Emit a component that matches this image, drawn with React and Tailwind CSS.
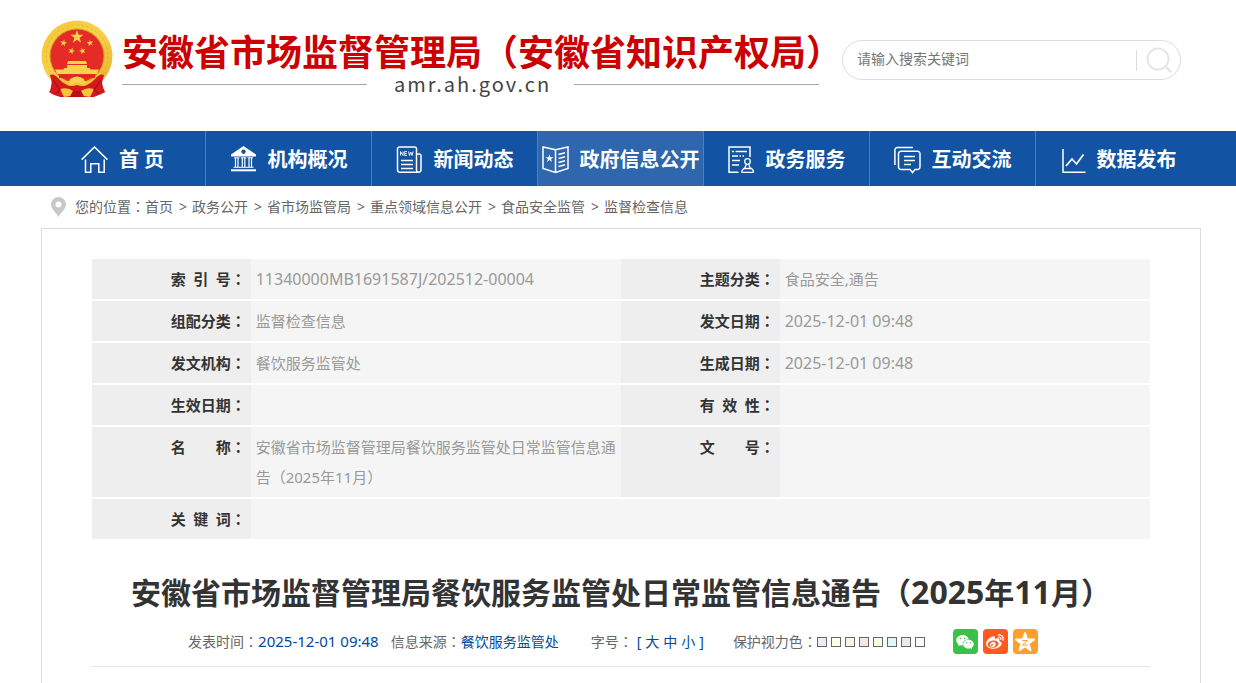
import { FaWeibo } from 'react-icons/fa'
import { AiFillWechat } from 'react-icons/ai'

const STAR = 'M0 -10 L2.3 -3.1 L9.5 -3.1 L3.7 1.2 L5.9 8.1 L0 3.8 L-5.9 8.1 L-3.7 1.2 L-9.5 -3.1 L-2.3 -3.1 Z'

const Emblem = () => (
  <svg className="h-[78px] w-[72px] shrink-0" viewBox="0 0 72 78">
    <defs>
      <linearGradient id="gold" x1="0" y1="0" x2="1" y2="1">
        <stop offset="0" stopColor="#f5c63a" />
        <stop offset="0.5" stopColor="#f8d24c" />
        <stop offset="1" stopColor="#e9ae2a" />
      </linearGradient>
    </defs>
    <path d="M11 54 Q14 64 26 64 L46 64 Q58 64 61 54 Q60 65 64 72 L57 75 L53 77 L19 77 L15 75 L9 72 Q11 64 11 54Z" fill="#c9151b" />
    <circle cx="36" cy="36" r="35.5" fill="url(#gold)" />
    <circle cx="36" cy="36" r="31" fill="none" stroke="#dfa026" strokeWidth="1.5" strokeDasharray="3 2" opacity="0.35" />
    <circle cx="36" cy="36" r="27.5" fill="#d9a022" />
    <circle cx="36" cy="36" r="26.5" fill="#e52b25" />
    <g fill="#f8d24c">
      <path d={STAR} transform="translate(36 17) scale(.7)" />
      <path d={STAR} transform="translate(22.5 23) scale(.36) rotate(12)" />
      <path d={STAR} transform="translate(49 23) scale(.36) rotate(-12)" />
      <path d={STAR} transform="translate(30.5 31) scale(.36) rotate(20)" />
      <path d={STAR} transform="translate(41.5 31) scale(.36) rotate(-20)" />
      <path d="M27 41h18l1 3h-20zM26 45h20v3H26zM23 48h26l1 4H22zM14 49.500h44l-2 4.500H16z" />
    </g>
    <path d="M18 55h36v3H18z" fill="#d92a22" />
    <path d="M9 55 Q13 53 18 59 Q24 66 32 65 L40 65 Q48 66 54 59 Q59 53 63 55 L60 66 L64 72 Q56 77 50 76 L22 76 Q14 77 8 72 L12 66Z" fill="#d7191d" />
    <path d="M20 59 Q28 64 36 57 Q44 64 52 59 Q47 67 40 66 L36 65 L32 66 Q25 67 20 59Z" fill="#f3c13b" />
    <path d="M29 59 Q36 54 43 59 L44 65 L36 62 L28 65Z" fill="#f8d24c" />
    <path d="M19 69 Q27 67 32 71 L29 76 L23 77Z M53 69 Q45 67 40 71 L43 76 L49 77Z" fill="#f5c63a" />
    <path d="M32 71h8l2 6H30z" fill="#b81117" />
    <path d="M12 60 L19 70 L14 74 M60 60 L53 70 L58 74" fill="none" stroke="#a90f15" strokeWidth="1.200" />
  </svg>
)

const iconProps = {
  className: 'h-7 w-[27px] shrink-0',
  viewBox: '0 0 27 28',
  fill: 'none',
  stroke: 'currentColor',
  strokeWidth: 1.5,
  'aria-hidden': true,
}

const HomeIcon = () => (
  <svg {...iconProps}>
    <path d="M.6 13.600 13.500 1 26.400 13.600M4.500 13.500V26.300H9.800V17.800H17.800V26.300H23.200V13.500" />
  </svg>
)

const BankIcon = () => (
  <svg {...iconProps}>
    <path d="M13.500 0 26 8.500V10.500H1V8.500Z M13.500 3.500a2.200 2.200 0 1 0 .01 0Z" fill="currentColor" fillRule="evenodd" stroke="none" />
    <path d="M5.500 12V21M8 12V21M12.300 12V21M14.800 12V21M19 12V21M21.500 12V21" strokeWidth="1.200" />
    <path d="M4 11.800H9.500M10.800 11.800H16.300M17.500 11.800H23M3.500 21.300H23.500" strokeWidth="1" />
    <path d="M1 24.300H26" strokeWidth="2" />
  </svg>
)

const NewsIcon = () => (
  <svg {...iconProps}>
    <path d="M20.500 26.300H4A2.500 2.500 0 0 1 1.500 24V3A2 2 0 0 1 3.500 1H18.500A2 2 0 0 1 20.500 3V24A2.200 2.200 0 0 0 25 24V9.500A1.500 1.500 0 0 0 23.500 8H20.500M20.500 26.300H23" />
    <path d="M5 14.500H17M5 18.500H17M5 22.500H17" />
    <path d="M4.500 9.500V5.500L7 9.500V5.500M11 5.500H8.700V9.500H11M8.700 7.500H10.700M12.500 5.500 13.500 9.500 14.800 6 16 9.500 17.200 5.500" strokeWidth=".9" />
  </svg>
)

const BookIcon = () => (
  <svg {...iconProps}>
    <path d="M13.500 3.800 1 1V22.500L13.500 26.500 26 22.500V1Z M13.500 3.800V26.500" />
    <path d={STAR} transform="translate(7.500 12.500) scale(.42)" fill="currentColor" stroke="none" />
    <path d="M16.500 8.500 23 6.800M16.500 12.500 23 10.800M16.500 16.500 23 14.800M16.500 20.500 23 18.800" />
  </svg>
)

const StampIcon = () => (
  <svg {...iconProps}>
    <path d="M10.500 26.300H1V1H22V11" />
    <path d="M4 5.500H6M7.500 5.500H19M4 10H10M11.500 10H13M14.500 10H16M4 14.500H12M4 19H11" strokeWidth="1.300" />
    <circle cx="19.500" cy="15.500" r="2.800" strokeWidth="1.300" />
    <path d="M18.500 18 16.500 22.500H22.500L20.500 18M14 26.300V24.500L16 22.500H23.500L25.300 24.500V26.300Z" strokeWidth="1.300" />
  </svg>
)

const ChatIcon = () => (
  <svg {...iconProps}>
    <path d="M.9 19V4A2.500 2.500 0 0 1 3.400 1.500H19" />
    <path d="M7 5.300H23.500A2.500 2.500 0 0 1 26 7.800V21A2.500 2.500 0 0 1 23.500 23.500H21L18.500 26.500 16 23.500H7A2.500 2.500 0 0 1 4.500 21V7.800A2.500 2.500 0 0 1 7 5.300Z" />
    <path d="M10 10.500H21M10 14.500H21M10 18.500H17" />
  </svg>
)

const ChartIcon = () => (
  <svg {...iconProps} className="h-7 w-6 shrink-0" viewBox="0 0 24 28">
    <path d="M1 3V26.300H23.500" />
    <path d="M4 20 10 13 14.500 18 21.500 8.500" strokeWidth="1.700" />
  </svg>
)

// the full-width colon sits in the middle of its box in this face
const Colon = () => <span className="leading-none font-['Noto_Sans_CJK_TC',sans-serif]">：</span>

const navItems = [
  { label: '首 页', icon: HomeIcon },
  { label: '机构概况', icon: BankIcon },
  { label: '新闻动态', icon: NewsIcon },
  { label: '政府信息公开', icon: BookIcon, active: true },
  { label: '政务服务', icon: StampIcon },
  { label: '互动交流', icon: ChatIcon },
  { label: '数据发布', icon: ChartIcon },
]

const crumbs = ['首页', '政务公开', '省市场监管局', '重点领域信息公开', '食品安全监管', '监督检查信息']

const rows = [
  ['索 引 号', '11340000MB1691587J/202512-00004', '主题分类', '食品安全,通告'],
  ['组配分类', '监督检查信息', '发文日期', <span className="text-base">2025-12-01 09:48</span>],
  ['发文机构', '餐饮服务监管处', '生成日期', <span className="text-base">2025-12-01 09:48</span>],
  ['生效日期', '', '有 效 性', ''],
  ['名 称', '安徽省市场监督管理局餐饮服务监管处日常监管信息通告（2025年11月）', '文 号', ''],
]
rows[0][1] = <span className="text-base">{rows[0][1]}</span>

const swatches = [
  { name: '浅蓝', color: 'bg-[#e9eef6]' },
  { name: '浅黄', color: 'bg-[#faffe6]' },
  { name: '杏色', color: 'bg-[#fff2e2]' },
  { name: '粉色', color: 'bg-[#fde6e0]' },
  { name: '浅绿', color: 'bg-[#f3ffe1]' },
  { name: '青色', color: 'bg-[#dafaf3]' },
  { name: '灰色', color: 'bg-[#eaeaef]' },
  { name: '白色', color: 'bg-white' },
]

const Label = ({ children }) => (
  <th scope="row" className="border-b-2 border-white bg-[#eee] py-[5px] pr-[5px] text-right align-top font-bold whitespace-nowrap text-[#333]">
    <span className="inline-block w-[60px] [text-align-last:justify]">{children}</span>
    <Colon />
  </th>
)

const Value = ({ children, span }) => (
  <td colSpan={span} className="border-b-2 border-white bg-[#f5f5f5] py-[5px] pl-[5px] align-top">{children}</td>
)

const Header = () => (
  <header className="flex h-[131px] items-start justify-between pr-[55px] pl-[41px]">
    <div className="flex pt-5">
      <Emblem />
      <div className="ml-[9px] pt-[10px]">
        <h1 className="-mr-5 text-[36px] leading-10 font-bold whitespace-nowrap text-[#c00] font-['Noto_Sans_CJK_SC',sans-serif]">
          安徽省市场监督管理局（安徽省知识产权局）
        </h1>
        <div className="mt-[2px] flex w-[697px] items-center justify-between">
          <span className="h-px w-[245px] bg-[#aaa]" />
          <span className="pl-1 text-[20px] leading-6 tracking-[2px] text-[#444] font-['Noto_Sans_CJK_SC',sans-serif]">amr.ah.gov.cn</span>
          <span className="h-px w-[245px] bg-[#aaa]" />
        </div>
      </div>
    </div>
    <form className="mt-10 flex h-10 w-[339px] shrink-0 items-center rounded-full border border-[#ddd]">
      <input
        type="text"
        aria-label="搜索"
        placeholder="请输入搜索关键词"
        className="min-w-0 flex-1 pb-0.5 pl-[14px] text-sm outline-none placeholder:text-[#757575]"
      />
      <button type="button" aria-label="搜索" className="flex h-[21px] w-11 items-center border-l border-[#ddd] pl-[9px]">
        <svg className="size-[26px]" viewBox="0 0 26 26" fill="none" stroke="#e6e6e6" strokeWidth="2">
          <circle cx="12" cy="12" r="10.500" />
          <path d="M19 19 25 25" strokeWidth="2.500" />
        </svg>
      </button>
    </form>
  </header>
)

const Nav = () => (
  <nav className="bg-[#1253a4] pr-[34px] pl-10">
    <ul className="grid grid-cols-7">
      {navItems.map(({ label, icon: Icon, active }, i) => (
        <li key={label} className={i < navItems.length - 1 ? 'border-r border-[#4d80bd]' : ''}>
          <a
            href="#"
            className={`flex h-[55px] items-center justify-center gap-[11px] pt-0.5 text-[20px] font-bold whitespace-nowrap text-white ${active ? 'bg-[#2f67af]' : ''}`}
          >
            <Icon />
            {label}
          </a>
        </li>
      ))}
    </ul>
  </nav>
)

const Breadcrumb = () => (
  <div className="flex h-[42px] items-center pl-[51px] text-sm text-[#666]">
    <svg className="mr-[9px] h-5 w-[15px]" viewBox="0 0 15 20">
      <path d="M7.500 0A7.500 7.500 0 0 0 0 7.500C0 12.500 5 15 7.500 20 10 15 15 12.500 15 7.500A7.500 7.500 0 0 0 7.500 0ZM7.500 4.500a3 3 0 1 1 0 6 3 3 0 0 1 0-6Z" fill="#c8c8c8" fillRule="evenodd" />
    </svg>
    <span>您的位置<Colon /></span>
    {crumbs.map((c, i) => (
      <span key={c} className="whitespace-nowrap">
        {i > 0 && <span className="pr-[5px] pl-[6px]">&gt;</span>}
        <a href="#">{c}</a>
      </span>
    ))}
  </div>
)

const App = () => {
  return (
    <div className="flex min-h-screen flex-col bg-white font-['Noto_Sans','Noto_Sans_CJK_SC',sans-serif]">
      <Header />
      <Nav />
      <Breadcrumb />
      <main className="mr-[35px] ml-[41px] flex-1 border border-b-0 border-[#ddd] px-[50px] pt-[30px]">
        <table className="w-full table-fixed border-collapse text-[15px] leading-[30px] text-[#999]">
          <colgroup>
            <col className="w-[15%]" />
            <col className="w-[35%]" />
            <col className="w-[15%]" />
            <col className="w-[35%]" />
          </colgroup>
          <tbody>
            {rows.map(([a, b, c, d]) => (
              <tr key={a}>
                <Label>{a}</Label>
                <Value>{b}</Value>
                <Label>{c}</Label>
                <Value>{d}</Value>
              </tr>
            ))}
            <tr>
              <Label>关 键 词</Label>
              <Value span={3} />
            </tr>
          </tbody>
        </table>

        <h2 className="mt-[26px] h-[50px] text-center text-[30px] leading-[50px] font-bold whitespace-nowrap text-[#333]">
          安徽省市场监督管理局餐饮服务监管处日常监管信息通告（<span className="text-[32px]">2025</span>年<span className="text-[32px]">11</span>月）
        </h2>

        <div className="flex h-[50px] items-center justify-center border-b border-[#e5e5e5] pr-4 text-sm whitespace-nowrap text-[#666]">
          <span>发表时间<Colon /></span>
          <span className="text-[15px] text-[#014a97]">2025-12-01 09:48</span>
          <span className="ml-3">信息来源<Colon /></span>
          <span className="text-[#014a97]">餐饮服务监管处</span>
          <span className="ml-8">字号<Colon /></span>
          <span className="ml-1 flex gap-1 text-[#014a97]">
            [
            <button type="button">大</button>
            <button type="button">中</button>
            <button type="button">小</button>
            ]
          </span>
          <span className="ml-[29px]">保护视力色<Colon /></span>
          <span className="flex gap-1">
            {swatches.map(({ name, color }) => (
              <button key={name} type="button" aria-label={name} className={`size-[10px] border border-[#666] ${color}`} />
            ))}
          </span>
          <span className="ml-7 flex gap-[5px] text-white">
            <a href="#" aria-label="微信" className="flex size-[25px] items-center justify-center rounded bg-[#3ac244]">
              <AiFillWechat className="size-5" />
            </a>
            <a href="#" aria-label="微博" className="flex size-[25px] items-center justify-center rounded bg-[#ff5a1f]">
              <FaWeibo className="size-[18px]" />
            </a>
            <a href="#" aria-label="QQ空间" className="flex size-[25px] items-center justify-center rounded bg-[#ff9f2e]">
              <svg className="size-5" viewBox="-10 -10 20 20">
                <path d={STAR} fill="#fff" stroke="#fff" strokeWidth="2" strokeLinejoin="round" transform="translate(0 .5) scale(.95)" />
                <path d="M-2.500 -1.500H2.500L-2.500 3H3" fill="none" stroke="#ff9f2e" strokeWidth="1" />
              </svg>
            </a>
          </span>
        </div>
      </main>
    </div>
  )
}

export default App
